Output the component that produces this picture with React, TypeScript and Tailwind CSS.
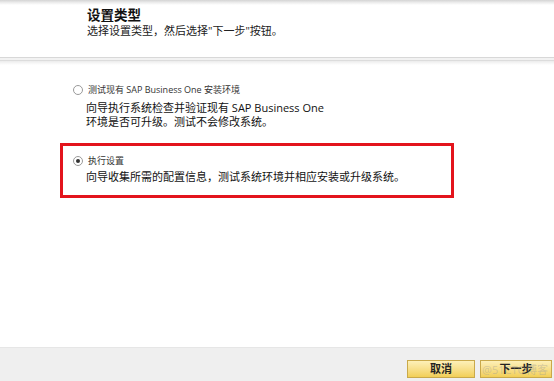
import React from 'react';

const Radio: React.FC<{ checked?: boolean }> = ({ checked }) => (
  <span className="w-[10px] h-[10px] rounded-full border border-[#9a9a9a] bg-white flex items-center justify-center shrink-0">
    {checked && <span className="w-[4px] h-[4px] rounded-full bg-[#333]" />}
  </span>
);

export default function App() {
  return (
    <div className="h-screen w-full flex flex-col bg-white text-[#1a1a1a] font-['Open_Sans','Noto_Sans_CJK_SC',sans-serif] overflow-hidden">
      {/* top strip */}
      <div className="h-[5px] bg-gradient-to-b from-[#d4d4d4] via-[#ececec] to-white" />

      {/* header */}
      <div className="h-[52px] pl-[87px] pt-[2px]">
        <div className="text-[13.5px] leading-[16px] font-bold text-[#111]">设置类型</div>
        <div className="text-[11px] leading-[14px] mt-[1px] text-[#222]">选择设置类型，然后选择"下一步"按钮。</div>
      </div>

      {/* separator */}
      <div className="h-[8px] flex flex-col">
        <div className="h-[1px] bg-[#d8d8d8]" />
        <div className="h-[2px] bg-[#f2f2f2]" />
        <div className="h-[1px] bg-[#dcdcdc]" />
        <div className="flex-1 bg-gradient-to-b from-[#ececec] to-white" />
      </div>

      {/* body */}
      <div className="flex-1 pl-[60px]">
        <div className="pl-[13px] pt-[19px]">
          <div className="flex items-center h-[12px] gap-[5px]">
            <Radio />
            <span className="text-[9px] leading-[12px] text-[#333]">测试现有 SAP Business One 安装环境</span>
          </div>
          <div className="pl-[13px] mt-[5px] text-[11px] leading-[14px] text-[#111]">
            向导执行系统检查并验证现有 SAP Business One
            <br />
            环境是否可升级。测试不会修改系统。
          </div>
        </div>

        <div className="mt-[14px] w-[394px] h-[55px] border-[3px] border-[#e3141c] pl-[10px] pt-[9px]">
          <div className="flex items-center h-[12px] gap-[5px]">
            <Radio checked />
            <span className="text-[9px] leading-[12px] text-[#333]">执行设置</span>
          </div>
          <div className="pl-[13px] mt-[3px] text-[11px] leading-[14px] text-[#111]">
            向导收集所需的配置信息，测试系统环境并相应安装或升级系统。
          </div>
        </div>
      </div>

      {/* footer */}
      <div className="relative h-[34px] bg-[#efefef] border-t border-[#e6e6e6] flex justify-end items-start pt-[12px] pr-[2px] gap-[5px]">
        <button className="w-[68px] h-[18px] border border-[#c9a94a] bg-gradient-to-b from-[#fdf0b8] to-[#f2cf56] text-[11px] leading-[16px] font-semibold text-[#222]">
          取消
        </button>
        <button className="w-[72px] h-[18px] border border-[#c9a94a] bg-gradient-to-b from-[#fdf0b8] to-[#f2cf56] text-[11px] leading-[16px] font-semibold text-[#222]">
          下一步
        </button>
        <span className="pointer-events-none absolute right-[6px] top-[15px] text-[11px] leading-[14px] text-[#9a9a9a]/40">@51CTO博客</span>
      </div>
    </div>
  );
}
